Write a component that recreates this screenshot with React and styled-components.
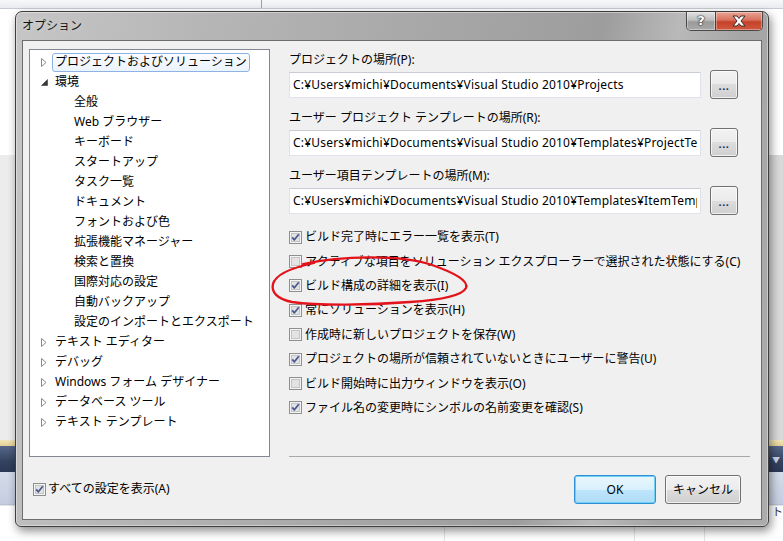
import React from 'react';
import styled, { createGlobalStyle } from 'styled-components';

const Global = createGlobalStyle`
  html, body { margin: 0; padding: 0; }
  body {
    width: 783px; height: 541px; overflow: hidden; background: #ffffff;
    font-family: "Noto Sans", "Noto Sans CJK JP", sans-serif;
    font-size: 12px; color: #000;
  }
  * { box-sizing: border-box; }
`;

const Stage = styled.div`
  position: relative;
  width: 783px;
  height: 541px;
  overflow: hidden;
`;

/* ---------- backdrop (the application behind the dialog) ---------- */
const Backdrop = styled.div`
  display: flex;
  flex-direction: column;
  width: 100%;
  height: 100%;
`;
const TopStrip = styled.div`
  height: 9px;
  display: flex;
  background: linear-gradient(#f7f8fa, #e8ebf0);
  border-bottom: 1px solid #c5cad3;
`;
const TopCell = styled.div`
  width: ${p => p.$w}px;
  border-right: 1px solid #9aa0aa;
`;
const UpperArea = styled.div`
  height: 431px;
  display: flex;
  justify-content: space-between;
  background: #ffffff;
`;
const Gutter = styled.div`
  width: 16px;
  background: linear-gradient(#ffffff 0 146px, ${p => p.$tone} 146px);
`;
const AccentLine = styled.div`
  height: 6px;
  background: linear-gradient(#f3e6bd, #e3cf92);
`;
const NavyBand = styled.div`
  height: 26px;
  display: flex;
  justify-content: flex-end;
  align-items: center;
  padding-right: 3px;
  background: linear-gradient(#56678a, #34425f 60%, #2c3956);
  color: #c9d2e6;
  font-size: 8px;
`;
const LightBand = styled.div`
  height: 33px;
  background: linear-gradient(#d5dcea, #c4cde0);
  border-bottom: 1px solid #b8c1d4;
`;
const LowerArea = styled.div`
  flex: 1;
  display: flex;
  justify-content: flex-end;
  background:
    linear-gradient(90deg, transparent 444px, #e3e3e3 444px, #e3e3e3 445px, transparent 445px,
      transparent 634px, #e3e3e3 634px, #e3e3e3 635px, transparent 635px,
      transparent 704px, #e3e3e3 704px, #e3e3e3 705px, transparent 705px),
    #ffffff;
  border-top: 1px solid #e6e6e6;
  color: #333;
  font-size: 11px;
  line-height: 12px;
`;

/* ---------- dialog window ---------- */
const Window = styled.div`
  position: absolute;
  left: 15px;
  top: 11px;
  width: 754px;
  height: 516px;
  display: flex;
  flex-direction: column;
  border: 1px solid #3e3e3e;
  border-radius: 7px 7px 6px 6px;
  background: linear-gradient(100deg, #c6c6c6 0%, #b6b6b6 22%, #a8a8a8 48%, #9d9d9d 70%,
    #b9b9b9 79%, #a5a5a5 87%, #acacac 100%);
  box-shadow: inset 0 0 0 1px rgba(255,255,255,0.4), 2px 4px 10px rgba(0,0,0,0.45);
`;
const TitleBar = styled.div`
  height: 28px;
  display: flex;
  justify-content: space-between;
  align-items: flex-start;
  padding-left: 6px;
`;
const TitleText = styled.div`
  margin-top: 6px;
  line-height: 16px;
  color: #141414;
  text-shadow: 0 0 6px rgba(255,255,255,0.55);
`;
const CaptionGroup = styled.div`
  display: flex;
  margin-right: 5px;
  border: 1px solid #4a4a4a;
  border-top: none;
  border-radius: 0 0 5px 5px;
  overflow: hidden;
`;
const CaptionButton = styled.div`
  width: ${p => p.$w}px;
  height: 18px;
  display: flex;
  align-items: center;
  justify-content: center;
  background: ${p => p.$close
    ? 'linear-gradient(#e9a595, #d8705c 45%, #c5412a 55%, #cf5a3f)'
    : 'linear-gradient(#e2e2e2, #bdbdbd 45%, #9a9a9a 55%, #a9a9a9)'};
  border-left: ${p => p.$close ? '1px solid #5a3a34' : 'none'};
  box-shadow: inset 0 0 0 1px rgba(255,255,255,0.35);
`;
const HelpGlyph = styled.span`
  font-family: "DejaVu Sans", sans-serif;
  font-weight: bold;
  font-size: 13px;
  line-height: 14px;
  color: #ffffff;
  text-shadow: 0 0 1px #222, 0 0 1px #222, 0 0 2px #333;
`;

const Client = styled.div`
  flex: 1;
  display: flex;
  flex-direction: column;
  margin: 0 6px 6px 6px;
  padding: 8px 11px 0 6px;
  border: 1px solid #6d6d6d;
  background: #f0f0f0;
`;
const MainRow = styled.div`
  height: 408px;
  display: flex;
`;

/* ---------- tree ---------- */
const Tree = styled.div`
  flex: none;
  width: 241px;
  height: 100%;
  padding-top: 2px;
  background: #ffffff;
  border: 1px solid #828790;
`;
const TreeRow = styled.div`
  height: 20px;
  display: flex;
  align-items: center;
  padding-left: ${p => 7 + p.$level * 19}px;
`;
const Expander = styled.div`
  width: 14px;
  height: 20px;
  display: flex;
  align-items: center;
  justify-content: center;
`;
const TreeLabel = styled.div`
  margin-left: 1px;
  height: 19px;
  display: flex;
  align-items: center;
  padding: 0 2px;
  border: 1px solid ${p => p.$selected ? '#8db2e3' : 'transparent'};
  border-radius: 3px;
  background: ${p => p.$selected ? 'linear-gradient(#fafcff, #ebf3fd)' : 'transparent'};
  white-space: nowrap;
  line-height: 16px;
`;

/* ---------- right pane ---------- */
const RightPane = styled.div`
  flex: 1;
  min-width: 0;
  margin-left: 19px;
  padding-top: 3px;
  display: flex;
  flex-direction: column;
  border-bottom: 1px solid #a8a8a8;
`;
const Fields = styled.div`
  display: flex;
  flex-direction: column;
  gap: 11px;
  padding-right: 12px;
`;
const FieldGroup = styled.div`
  display: flex;
  flex-direction: column;
  gap: 2px;
`;
const FieldLabel = styled.div`
  line-height: 16px;
  height: 16px;
  white-space: nowrap;
`;
const FieldRow = styled.div`
  height: 29px;
  display: flex;
  align-items: center;
  gap: 9px;
`;
const TextBox = styled.input`
  flex: 1;
  min-width: 0;
  height: 26px;
  margin: 0;
  padding: 0 3px;
  background: #ffffff;
  border: 1px solid #dfe2e8;
  border-top-color: #c9ccd3;
  border-radius: 0;
  outline: none;
  font-family: inherit;
  font-size: 12px;
  color: #000;
  line-height: 16px;
  letter-spacing: 0.2px;
`;
const PushButton = styled.div`
  flex: none;
  width: ${p => p.$w}px;
  height: 29px;
  display: flex;
  align-items: center;
  justify-content: center;
  border: 1px solid #707070;
  border-radius: 3px;
  background: linear-gradient(#f2f2f2, #ebebeb 50%, #dddddd 50%, #cfcfcf);
  box-shadow: inset 0 0 0 1px rgba(255,255,255,0.7);
  line-height: 16px;
`;
const DefaultButton = styled(PushButton)`
  border-color: #2f8fd6;
  background: linear-gradient(#eaf6fd, #d9f0fc 50%, #bee6fd 50%, #b0dcf5);
  box-shadow: inset 0 0 0 1px #6fd0f6;
`;
const Dots = styled.span`
  margin-top: 3px;
  font-size: 11px;
  font-weight: bold;
  letter-spacing: 0.5px;
  color: #1f2d4d;
`;
const CheckList = styled.div`
  margin-top: 10px;
  display: flex;
  flex-direction: column;
`;
const CheckRow = styled.div`
  height: 24.4px;
  display: flex;
  align-items: center;
  gap: ${p => p.$gap ?? 3}px;
  white-space: nowrap;
  line-height: 16px;
`;

/* ---------- bottom bar ---------- */
const BottomRow = styled.div`
  height: 29px;
  margin-top: 18px;
  padding: 0 9px 0 4px;
  display: flex;
  align-items: center;
  justify-content: space-between;
`;
const ButtonGroup = styled.div`
  display: flex;
  gap: 9px;
`;

const Annotation = styled.svg`
  position: absolute;
  left: 0;
  top: 0;
  pointer-events: none;
`;

/* ---------- drawings ---------- */
const Collapsed = () => (
  <svg width="6" height="9" viewBox="0 0 6 9">
    <path d="M0.5 0.5 L5 4.5 L0.5 8.5 Z" fill="#ffffff" stroke="#8a8a8a" strokeWidth="1" />
  </svg>
);
const Expanded = () => (
  <svg width="7" height="7" viewBox="0 0 7 7">
    <path d="M6.5 0.5 L6.5 6.5 L0.5 6.5 Z" fill="#3a3a3a" stroke="#3a3a3a" strokeWidth="0.6" />
  </svg>
);
const CheckBox = ({ checked }) => (
  <svg width="13" height="13" viewBox="0 0 13 13" style={{ flex: 'none' }}>
    <rect x="0.5" y="0.5" width="12" height="12" fill="#f4f4f4" stroke="#8e8f8f" />
    <rect x="2.5" y="2.5" width="8" height="8" fill="#e3e3e3" stroke="#c4c4c4" />
    {checked && (
      <path d="M3.2 6.3 L5.4 8.8 L9.8 3.3" fill="none" stroke="#4a5b8f" strokeWidth="1.8" strokeLinejoin="round" />
    )}
  </svg>
);
const CloseGlyph = () => (
  <svg width="16" height="12" viewBox="0 0 16 12">
    <path d="M2 1 H6 L8 3.5 L10 1 H14 L10 6 L14 11 H10 L8 8.5 L6 11 H2 L6 6 Z"
      fill="#ffffff" stroke="#3c2a26" strokeWidth="1" strokeLinejoin="round" />
  </svg>
);

const treeItems = [
  { label: 'プロジェクトおよびソリューション', level: 0, exp: 'c', selected: true },
  { label: '環境', level: 0, exp: 'e' },
  { label: '全般', level: 1 },
  { label: 'Web ブラウザー', level: 1 },
  { label: 'キーボード', level: 1 },
  { label: 'スタートアップ', level: 1 },
  { label: 'タスク一覧', level: 1 },
  { label: 'ドキュメント', level: 1 },
  { label: 'フォントおよび色', level: 1 },
  { label: '拡張機能マネージャー', level: 1 },
  { label: '検索と置換', level: 1 },
  { label: '国際対応の設定', level: 1 },
  { label: '自動バックアップ', level: 1 },
  { label: '設定のインポートとエクスポート', level: 1 },
  { label: 'テキスト エディター', level: 0, exp: 'c' },
  { label: 'デバッグ', level: 0, exp: 'c' },
  { label: 'Windows フォーム デザイナー', level: 0, exp: 'c' },
  { label: 'データベース ツール', level: 0, exp: 'c' },
  { label: 'テキスト テンプレート', level: 0, exp: 'c' },
];

const fields = [
  { label: 'プロジェクトの場所(P):', value: 'C:¥Users¥michi¥Documents¥Visual Studio 2010¥Projects' },
  { label: 'ユーザー プロジェクト テンプレートの場所(R):', value: 'C:¥Users¥michi¥Documents¥Visual Studio 2010¥Templates¥ProjectTemplates' },
  { label: 'ユーザー項目テンプレートの場所(M):', value: 'C:¥Users¥michi¥Documents¥Visual Studio 2010¥Templates¥ItemTemplates' },
];

const checks = [
  ['ビルド完了時にエラー一覧を表示(T)', true],
  ['アクティブな項目をソリューション エクスプローラーで選択された状態にする(C)', false],
  ['ビルド構成の詳細を表示(I)', true],
  ['常にソリューションを表示(H)', true],
  ['作成時に新しいプロジェクトを保存(W)', false],
  ['プロジェクトの場所が信頼されていないときにユーザーに警告(U)', true],
  ['ビルド開始時に出力ウィンドウを表示(O)', false],
  ['ファイル名の変更時にシンボルの名前変更を確認(S)', true],
];

export default function App() {
  return (
    <Stage>
      <Global />
      <Backdrop>
        <TopStrip><TopCell $w={262} /></TopStrip>
        <UpperArea>
          <Gutter $tone="#ececec" />
          <Gutter $tone="#d9d9d9" />
        </UpperArea>
        <AccentLine />
        <NavyBand>▼</NavyBand>
        <LightBand />
        <LowerArea><span>ト</span></LowerArea>
      </Backdrop>

      <Window>
        <TitleBar>
          <TitleText>オプション</TitleText>
          <CaptionGroup>
            <CaptionButton $w={28}><HelpGlyph>?</HelpGlyph></CaptionButton>
            <CaptionButton $w={47} $close><CloseGlyph /></CaptionButton>
          </CaptionGroup>
        </TitleBar>
        <Client>
          <MainRow>
            <Tree>
              {treeItems.map((it, i) => (
                <TreeRow key={i} $level={it.level}>
                  <Expander>
                    {it.exp === 'c' && <Collapsed />}
                    {it.exp === 'e' && <Expanded />}
                  </Expander>
                  <TreeLabel $selected={it.selected}>{it.label}</TreeLabel>
                </TreeRow>
              ))}
            </Tree>
            <RightPane>
              <Fields>
                {fields.map((f, i) => (
                  <FieldGroup key={i}>
                    <FieldLabel>{f.label}</FieldLabel>
                    <FieldRow>
                      <TextBox readOnly value={f.value} />
                      <PushButton $w={28}><Dots>...</Dots></PushButton>
                    </FieldRow>
                  </FieldGroup>
                ))}
              </Fields>
              <CheckList>
                {checks.map(([t, c], i) => (
                  <CheckRow key={i}>
                    <CheckBox checked={c} />
                    <span>{t}</span>
                  </CheckRow>
                ))}
              </CheckList>
            </RightPane>
          </MainRow>
          <BottomRow>
            <CheckRow $gap={2}>
              <CheckBox checked />
              <span>すべての設定を表示(A)</span>
            </CheckRow>
            <ButtonGroup>
              <DefaultButton $w={82}>OK</DefaultButton>
              <PushButton $w={76}>キャンセル</PushButton>
            </ButtonGroup>
          </BottomRow>
        </Client>
      </Window>

      <Annotation width="783" height="541" viewBox="0 0 783 541">
        <path
          d="M303 264 C340 256 400 254 432 265 C455 273 469 281 466 288 C462 296 440 300 410 302 C370 305 320 306 292 302 C277 299 271 292 273 284 C275 276 286 269 314 263"
          fill="none" stroke="#e3131c" strokeWidth="2.3" strokeLinecap="round" />
      </Annotation>
    </Stage>
  );
}
